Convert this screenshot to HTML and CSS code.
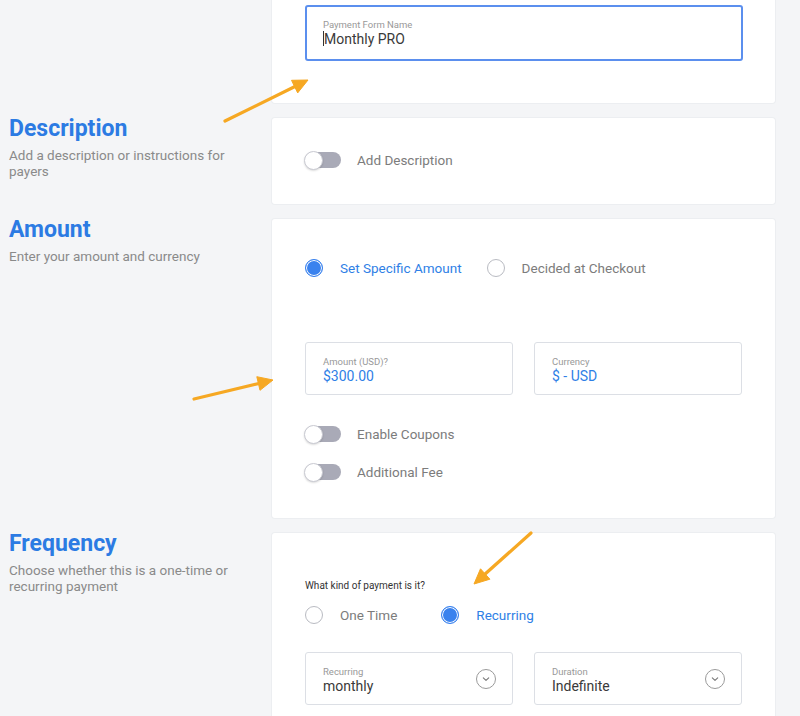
FILE: index.html
```html
<!DOCTYPE html>
<html>
<head>
<meta charset="utf-8">
<link rel="stylesheet" href="styles.css">
</head>
<body>
<div class="page">
  <section class="row">
    <div class="side"></div>
    <div class="card card-name">
      <div class="field field-focus">
        <div class="field-label">Payment Form Name</div>
        <div class="field-value dark"><span class="caret"></span>Monthly PRO</div>
      </div>
    </div>
  </section>

  <section class="row">
    <div class="side">
      <h2 class="side-title">Description</h2>
      <p class="side-text">Add a description or instructions for payers</p>
    </div>
    <div class="card card-desc">
      <div class="toggle-row">
        <span class="toggle"><span class="knob"></span></span>
        <span class="toggle-label">Add Description</span>
      </div>
    </div>
  </section>

  <section class="row">
    <div class="side">
      <h2 class="side-title">Amount</h2>
      <p class="side-text">Enter your amount and currency</p>
    </div>
    <div class="card card-amount">
      <div class="radio-group">
        <label class="radio-opt"><span class="radio on"></span><span class="radio-label on">Set Specific Amount</span></label>
        <label class="radio-opt"><span class="radio"></span><span class="radio-label">Decided at Checkout</span></label>
      </div>
      <div class="field-pair amount-pair">
        <div class="field">
          <div class="field-label">Amount (USD)?</div>
          <div class="field-value blue">$300.00</div>
        </div>
        <div class="field">
          <div class="field-label">Currency</div>
          <div class="field-value blue">$ - USD</div>
        </div>
      </div>
      <div class="toggles">
        <div class="toggle-row">
          <span class="toggle"><span class="knob"></span></span>
          <span class="toggle-label">Enable Coupons</span>
        </div>
        <div class="toggle-row">
          <span class="toggle"><span class="knob"></span></span>
          <span class="toggle-label">Additional Fee</span>
        </div>
      </div>
    </div>
  </section>

  <section class="row">
    <div class="side">
      <h2 class="side-title">Frequency</h2>
      <p class="side-text">Choose whether this is a one-time or recurring payment</p>
    </div>
    <div class="card card-freq">
      <div class="question">What kind of payment is it?</div>
      <div class="radio-group wide">
        <label class="radio-opt"><span class="radio"></span><span class="radio-label">One Time</span></label>
        <label class="radio-opt"><span class="radio on"></span><span class="radio-label on">Recurring</span></label>
      </div>
      <div class="field-pair select-pair">
        <div class="field select">
          <div class="select-text">
            <div class="field-label">Recurring</div>
            <div class="field-value dark">monthly</div>
          </div>
          <span class="chev"><svg width="20" height="20" viewBox="0 0 20 20"><circle cx="10" cy="10" r="9.5" fill="none" stroke="#9a9a9a" stroke-width="1"/><path d="M7.3 8.9 L10 11.4 L12.7 8.9" fill="none" stroke="#777" stroke-width="1.1" stroke-linecap="round" stroke-linejoin="round"/></svg></span>
        </div>
        <div class="field select">
          <div class="select-text">
            <div class="field-label">Duration</div>
            <div class="field-value dark">Indefinite</div>
          </div>
          <span class="chev"><svg width="20" height="20" viewBox="0 0 20 20"><circle cx="10" cy="10" r="9.5" fill="none" stroke="#9a9a9a" stroke-width="1"/><path d="M7.3 8.9 L10 11.4 L12.7 8.9" fill="none" stroke="#777" stroke-width="1.1" stroke-linecap="round" stroke-linejoin="round"/></svg></span>
        </div>
      </div>
    </div>
  </section>
</div>

<svg class="arrows" width="800" height="716" viewBox="0 0 800 716">
  <g fill="#f6a823" stroke="#f6a823">
    <line x1="225" y1="121" x2="296" y2="86" stroke-width="3.2" stroke-linecap="round"/>
    <polygon points="308,80 297.7,92.9 291.5,80.3" stroke-width="1" stroke-linejoin="round"/>
    <line x1="194" y1="399" x2="260" y2="383.2" stroke-width="3.2" stroke-linecap="round"/>
    <polygon points="273,380 260,390.3 256.8,376.7" stroke-width="1" stroke-linejoin="round"/>
    <line x1="531" y1="533" x2="484" y2="575" stroke-width="3.2" stroke-linecap="round"/>
    <polygon points="474,584 489.9,579.2 480.5,568.8" stroke-width="1" stroke-linejoin="round"/>
  </g>
</svg>
</body>
</html>
```

FILE: styles.css
```css
* { box-sizing: border-box; }
html, body {
  margin: 0;
  padding: 0;
  background: #f4f5f7;
  font-family: Roboto, "Liberation Sans", Arial, sans-serif;
  color: #333;
}
body {
  position: relative;
  width: 800px;
  height: 716px;
  overflow: hidden;
}
.page {
  display: flex;
  flex-direction: column;
  gap: 15px;
}
.row {
  display: grid;
  grid-template-columns: 272px 503px;
  align-items: start;
}
.side {
  padding: 0 20px 0 9px;
}
.side-title {
  margin: 0;
  font-size: 23px;
  line-height: 22px;
  font-weight: 700;
  color: #2c7be3;
}
.side-text {
  margin: 7px 0 0;
  font-size: 13.5px;
  line-height: 16px;
  color: #8a8a8a;
}
.card {
  background: #fff;
  border-radius: 3px;
  box-shadow: 0 0 0 1px #eceef1;
  padding-left: 33px;
  padding-right: 32px;
}
.card-name {
  padding-top: 5px;
  padding-bottom: 42px;
  border-radius: 0 0 3px 3px;
}
.card-desc {
  padding-top: 33px;
  padding-bottom: 35px;
}
.card-amount {
  padding-top: 40px;
  padding-bottom: 37px;
}
.card-freq {
  padding-top: 47px;
  padding-bottom: 20px;
}

/* fields */
.field {
  border: 1px solid #dcdfe5;
  border-radius: 3px;
  height: 53px;
  padding: 13px 17px 0;
  background: #fff;
}
.field-focus {
  border: 2px solid #5b8fee;
  height: 56px;
  padding: 12px 16px 0;
}
.field-label {
  font-size: 9.5px;
  line-height: 11px;
  color: #999;
}
.field-value {
  font-size: 14px;
  line-height: 18px;
}
.field-value.dark { color: #3a3a3a; }
.field-value.blue { color: #2f7fe6; }
.caret {
  display: inline-block;
  width: 1px;
  height: 15px;
  background: #333;
  vertical-align: -2px;
}
.field-pair {
  display: grid;
  grid-template-columns: 208px 208px;
  gap: 21px;
}
.amount-pair { margin-top: 65px; }
.select-pair { margin-top: 28px; }
.select {
  display: flex;
  align-items: flex-start;
  justify-content: space-between;
  padding-right: 16px;
}
.chev {
  display: block;
  width: 20px;
  height: 20px;
  margin-top: 3px;
}
.chev svg { display: block; }

/* toggles */
.toggle-row {
  display: flex;
  align-items: center;
  height: 18px;
}
.toggles {
  margin-top: 30px;
  display: flex;
  flex-direction: column;
  gap: 20px;
}
.toggle {
  position: relative;
  display: block;
  width: 36px;
  height: 16px;
  border-radius: 8px;
  background: #a9aab7;
  flex: none;
}
.knob {
  position: absolute;
  left: -1px;
  top: -1.5px;
  width: 19px;
  height: 19px;
  border-radius: 50%;
  background: #fff;
  border: 1px solid #c9cad2;
  box-shadow: 0 1px 2px rgba(0,0,0,0.15);
}
.toggle-label {
  margin-left: 16px;
  font-size: 13.5px;
  color: #7c7c7c;
}

/* radios */
.radio-group {
  display: flex;
  align-items: center;
  gap: 25px;
  height: 18px;
}
.radio-group.wide { gap: 44px; }
.radio-opt {
  display: flex;
  align-items: center;
}
.radio {
  display: block;
  width: 18px;
  height: 18px;
  border-radius: 50%;
  border: 1.5px solid #b9bbc2;
  background: #fff;
  flex: none;
}
.radio.on {
  border: 1.5px solid #3a82ee;
  background: #3a82ee;
  box-shadow: inset 0 0 0 1px #fff;
}
.radio-label {
  margin-left: 17px;
  font-size: 13.5px;
  color: #7c7c7c;
}
.radio-label.on { color: #2f7fe6; }
.question {
  font-size: 10px;
  line-height: 12px;
  color: #333;
  margin-bottom: 14px;
}

.arrows {
  position: absolute;
  left: 0;
  top: 0;
  pointer-events: none;
}
```
